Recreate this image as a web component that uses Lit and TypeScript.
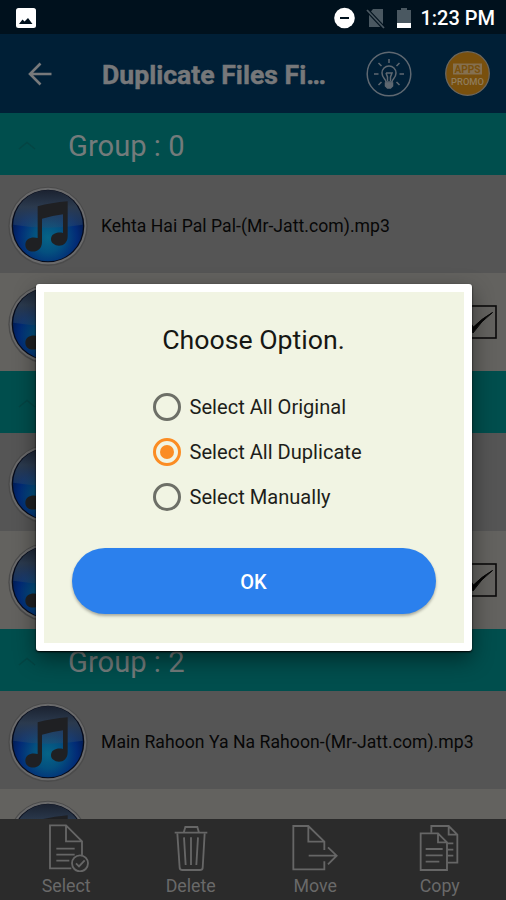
import { LitElement, html, css, svg } from 'lit'
import { customElement, property, state } from 'lit/decorators.js'

interface FileEntry {
  name: string
  checked: boolean
}

interface FileGroup {
  id: number
  files: FileEntry[]
}

const GROUPS: FileGroup[] = [
  {
    id: 0,
    files: [
      { name: 'Kehta Hai Pal Pal-(Mr-Jatt.com).mp3', checked: false },
      { name: '', checked: true }
    ]
  },
  {
    id: 1,
    files: [
      { name: '', checked: false },
      { name: '', checked: true }
    ]
  },
  {
    id: 2,
    files: [
      { name: 'Main Rahoon Ya Na Rahoon-(Mr-Jatt.com).mp3', checked: false },
      { name: '', checked: false }
    ]
  }
]

const OPTIONS = ['Select All Original', 'Select All Duplicate', 'Select Manually']

const ACTIONS = [
  {
    label: 'Select',
    icon: svg`
      <path d="M106 139H42V10H90L138 58V100M90 10V58H138"/>
      <path d="M61 80H116M61 98H116M61 116H100"/>
      <circle cx="132" cy="124" r="24"/>
      <path d="M120 124L129 133L146 115"/>`
  },
  {
    label: 'Delete',
    icon: svg`
      <path d="M41 32H139M68 32L73 15H109L114 32"/>
      <path d="M49 34L56 138Q57 144 64 144H117Q124 144 125 138L131 34"/>
      <path d="M69 46L74 129M90 46V129M111 46L106 129"/>`
  },
  {
    label: 'Move',
    icon: svg`
      <path d="M118 84V59L70 12H25V142H118V118M70 12V59H118"/>
      <path d="M71 101H155M129 76L155 101L129 127"/>`
  },
  {
    label: 'Copy',
    icon: svg`
      <path d="M32 34H84L111 61V144H32Z M84 34V61H111"/>
      <path d="M64 32V12H116L142 38V122H113M116 12V38H142"/>
      <path d="M47 81H98M47 100H98M47 119H88M112 64H130M112 83H130M112 101H130"/>`
  }
]

@customElement('file-row')
export class FileRow extends LitElement {
  @property()
  name = ''

  @property({ type: Boolean })
  checked = false

  static styles = css`
    :host {
      display: flex;
      align-items: center;
      height: 98px;
      flex: none;
      padding: 0 9px 0 8px;
      box-sizing: border-box;
      font-size: 17.6px;
      letter-spacing: 0.04px;
      color: #070707;
    }

    .disc {
      width: 80px;
      height: 80px;
      margin: 3px 13px 0 0;
      flex: none;
    }

    .name {
      flex: 1;
      white-space: nowrap;
      padding-top: 3px;
    }

    .box {
      width: 34px;
      height: 34px;
    }
  `

  render() {
    return html`
      <svg class="disc" viewBox="0 0 240 240">
        <defs>
          <radialGradient id="glow" cx="0.5" cy="0.66" r="0.6">
            <stop offset="0" stop-color="#066487"></stop>
            <stop offset="0.35" stop-color="#04507f"></stop>
            <stop offset="0.7" stop-color="#022a76"></stop>
            <stop offset="0.92" stop-color="#021a50"></stop>
            <stop offset="1" stop-color="#06122c"></stop>
          </radialGradient>
          <linearGradient id="gloss" x1="0" y1="0" x2="0" y2="1">
            <stop offset="0" stop-color="#1b2230"></stop>
            <stop offset="0.45" stop-color="#2b3a4e"></stop>
            <stop offset="1" stop-color="#2c4a6c" stop-opacity="0.4"></stop>
          </linearGradient>
        </defs>
        <circle cx="120" cy="121" r="119" fill="#4b4b4b"></circle>
        <circle cx="120" cy="120" r="115" fill="#6a6a6b"></circle>
        <circle cx="120" cy="120" r="109" fill="#060b1a"></circle>
        <circle cx="120" cy="121" r="105" fill="url(#glow)"></circle>
        <path d="M16 116A104 104 0 0 1 224 116Q120 134 16 116Z" fill="url(#gloss)"></path>
        <path
          d="M89 61Q130 50 179 46V150C179 190 129 184 129 160C129 143 148 137 165 141V85Q134 89 102 98V168C102 206 52 204 52 176C52 157 72 151 89 156Z"
          fill="#1f2023"
        ></path>
      </svg>
      <span class="name">${this.name}</span>
      ${this.checked
        ? html`<svg class="box" viewBox="0 0 34 34" fill="none">
            <rect x="1" y="1" width="32" height="32" stroke="#0a0a0a" stroke-width="1.6"></rect>
            <path d="M4 18L10 28Q18 16 29.5 7.5Q18 14 10.5 22L6 16Z" fill="#050505" stroke="#050505"></path>
          </svg>`
        : ''}
    `
  }
}

@customElement('option-dialog')
export class OptionDialog extends LitElement {
  @state()
  private selected = 1

  static styles = css`
    :host {
      display: flex;
      flex-direction: column;
      align-items: center;
      box-sizing: border-box;
      width: 436px;
      height: 367px;
      border: 8px solid #fff;
      border-radius: 3px;
      background: #f1f4e3;
      box-shadow: 0 1px 2px #000, 0 8px 22px rgba(0, 0, 0, 0.45);
    }

    .title {
      margin-top: 31px;
      font-size: 26.7px;
      line-height: 34px;
      color: #161713;
    }

    .options {
      display: flex;
      flex-direction: column;
      align-self: flex-start;
      margin: 27px 0 0 109px;
    }

    .option {
      display: flex;
      align-items: center;
      gap: 9px;
      height: 45px;
      font-size: 20.1px;
      color: #1d1e1a;
      cursor: pointer;
    }

    .radio {
      display: grid;
      place-items: center;
      box-sizing: border-box;
      width: 28px;
      height: 28px;
      border: 3px solid #6d6f67;
      border-radius: 50%;
    }

    .radio.on {
      border-color: #fb8c23;
    }

    .radio.on::after {
      content: '';
      width: 14px;
      height: 14px;
      border-radius: 50%;
      background: #fb8c23;
    }

    .ok {
      width: 364px;
      height: 66px;
      margin-top: 29px;
      border: none;
      border-radius: 33px;
      background: #2b80ed;
      box-shadow: 0 2px 3px rgba(0, 0, 0, 0.3);
      color: #fff;
      font: 500 20px Roboto, sans-serif;
      padding-top: 3px;
    }
  `

  render() {
    return html`
      <div class="title">Choose Option.</div>
      <div class="options">
        ${OPTIONS.map(
          (label, i) => html`
            <div class="option" @click=${() => (this.selected = i)}>
              <span class="radio ${this.selected === i ? 'on' : ''}"></span>
              <span>${label}</span>
            </div>
          `
        )}
      </div>
      <button class="ok">OK</button>
    `
  }
}

@customElement('app-root')
export class AppRoot extends LitElement {
  static styles = css`
    :host {
      display: flex;
      flex-direction: column;
      position: relative;
      width: 506px;
      height: 900px;
      overflow: hidden;
      font-family: Roboto, sans-serif;
      background: #555;
    }

    .status {
      display: flex;
      align-items: center;
      height: 34px;
      flex: none;
      box-sizing: border-box;
      padding: 1px 11px 0 16px;
      background: #00111d;
      color: #fff;
      font-size: 20px;
      font-weight: 500;
    }

    .picture {
      margin-right: auto;
    }

    .signals {
      margin-right: 8px;
    }

    .toolbar {
      display: flex;
      align-items: center;
      height: 79px;
      flex: none;
      box-sizing: border-box;
      padding: 0 15px 0 28px;
      background: #001f36;
    }

    .heading {
      flex: 1;
      margin-left: 50px;
      padding-top: 2px;
      font-size: 26.6px;
      font-weight: 700;
      -webkit-text-stroke: 0.5px #77787a;
      color: #77787a;
      white-space: nowrap;
    }

    .badge {
      margin-left: 33px;
    }

    .list {
      display: flex;
      flex-direction: column;
      flex: 1;
      min-height: 0;
      overflow: hidden;
    }

    .group {
      display: flex;
      align-items: center;
      height: 62px;
      flex: none;
      padding: 3px 0 0 18px;
      box-sizing: border-box;
      gap: 32px;
      background: #004e4d;
      color: #737b7b;
      font-size: 29.2px;
    }

    .copy {
      background: #63625f;
    }

    .actions {
      display: flex;
      height: 81px;
      flex: none;
      box-sizing: border-box;
      padding: 3px 4px 0;
      background: #2b2b2b;
    }

    .action {
      display: flex;
      flex-direction: column;
      align-items: center;
      flex: 1;
      color: #696969;
      font-size: 17.8px;
      line-height: 27px;
    }

    .overlay {
      position: absolute;
      inset: 0;
      display: flex;
      justify-content: center;
      align-items: flex-start;
      padding: 284px 0 0 1px;
    }
  `

  private renderStatus() {
    return html`
      <div class="status">
        <svg class="picture" width="20" height="20" viewBox="0 0 20 20">
          <rect width="20" height="20" rx="2.5" fill="#fff"></rect>
          <path d="M3 16L6.5 11.5L8.5 13.5L12 10L16.5 16Z" fill="#00111d"></path>
        </svg>
        <svg class="signals" width="78" height="22" viewBox="0 0 78 22">
          <circle cx="10.5" cy="11" r="10.3" fill="#fff"></circle>
          <path d="M6 11H15" stroke="#00111d" stroke-width="2"></path>
          <path d="M39 2H49V20H35V7Z" fill="#4a5861"></path>
          <path d="M33 3L50 21" stroke="#00111d" stroke-width="4"></path>
          <path d="M33 3L50 21" stroke="#4a5861" stroke-width="1.8"></path>
          <path d="M63 3H67V1H73V3H77V16H63Z" fill="#4a5861"></path>
          <path d="M63 16H77V21H63Z" fill="#fff"></path>
        </svg>
        <span>1:23 PM</span>
      </div>
    `
  }

  private renderToolbar() {
    return html`
      <div class="toolbar">
        <svg width="24" height="24" viewBox="0 0 24 24" fill="none" stroke="#77797b" stroke-width="2.6">
          <path d="M23.5 12H2.5M12.5 1.5L2 12L12.5 22.5"></path>
        </svg>
        <div class="heading">Duplicate Files Fi…</div>
        <svg width="46" height="46" viewBox="0 0 46 46" fill="none" stroke="#5f6871" stroke-width="1.5">
          <circle cx="23" cy="23" r="21.8"></circle>
          <path d="M20 31C20 28 16 27 16 22A7 7 0 0 1 30 22C30 27 26 28 26 31Z"></path>
          <path d="M20 22H26L24.5 26V30M20 22L21.5 26V30"></path>
          <path d="M19.5 32H26.500V35L24.500 37H21.500L19.500 35Z" fill="#5f6871"></path>
          <path d="M23 8V12M12.5 12L15.5 15M33.5 12L30.5 15M8 23H12.5M33.5 23H38M12.5 34L15.5 31M33.5 34L30.5 31"></path>
        </svg>
        <svg class="badge" width="46" height="46" viewBox="0 0 46 46">
          <circle cx="22.5" cy="22.5" r="21.8" fill="#79500d" stroke="#6b665d" stroke-width="1.3"></circle>
          <rect x="8" y="12.5" width="29" height="11" fill="#857050"></rect>
          <text x="22.5" y="22" font-size="10.5" font-weight="700" text-anchor="middle" textLength="26" lengthAdjust="spacingAndGlyphs" fill="#79500d">APPS</text>
          <text x="22.5" y="33.5" font-size="9.5" font-weight="500" text-anchor="middle" textLength="33" lengthAdjust="spacingAndGlyphs" fill="#8f7c5c">PROMO</text>
        </svg>
      </div>
    `
  }

  private renderGroup(group: FileGroup) {
    return html`
      <div class="group">
        <svg width="18" height="10" viewBox="0 0 18 10" fill="none" stroke="#044544" stroke-width="1.4">
          <path d="M1 8L9 1.5L17 8"></path>
        </svg>
        <span>Group : ${group.id}</span>
      </div>
      ${group.files.map(
        (file, i) => html`
          <file-row class=${i > 0 ? 'copy' : ''} .name=${file.name} .checked=${file.checked}></file-row>
        `
      )}
    `
  }

  render() {
    return html`
      ${this.renderStatus()}
      ${this.renderToolbar()}
      <div class="list">${GROUPS.map(group => this.renderGroup(group))}</div>
      <div class="actions">
        ${ACTIONS.map(
          action => html`
            <div class="action">
              <svg width="60" height="50" viewBox="0 0 180 150" fill="none" stroke="#666" stroke-width="5.5">
                ${action.icon}
              </svg>
              <span>${action.label}</span>
            </div>
          `
        )}
      </div>
      <div class="overlay"><option-dialog></option-dialog></div>
    `
  }
}

declare global {
  interface HTMLElementTagNameMap {
    'file-row': FileRow
    'option-dialog': OptionDialog
    'app-root': AppRoot
  }
}
